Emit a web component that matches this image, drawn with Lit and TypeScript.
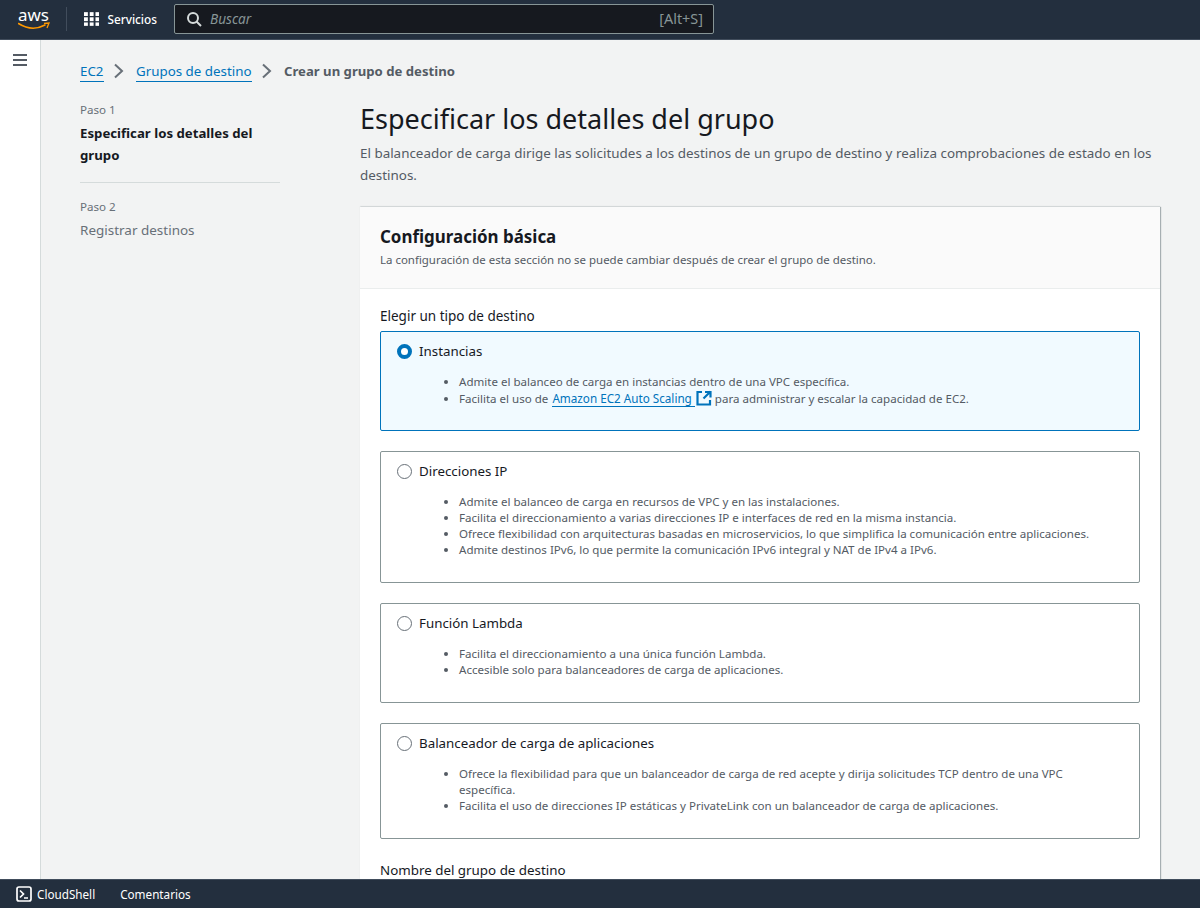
import { LitElement, html, css } from 'lit';
import { customElement } from 'lit/decorators.js';

const targets = [
  {
    name: 'Instancias',
    selected: true,
    height: 100,
    items: [
      html`Admite el balanceo de carga en instancias dentro de una VPC específica.`,
      html`Facilita el uso de <a class="scaling" href="#">Amazon EC2 Auto Scaling </a><svg class="ext" width="16" height="16" viewBox="0 0 16 16" fill="none" stroke="#0073bb" stroke-width="2.2"><path d="M9 2H14.5V7.5M14.5 1.5L7.5 8.5M6 2H1.5V14.5H14V10"/></svg> para administrar y escalar la capacidad de EC2.`,
    ],
  },
  {
    name: 'Direcciones IP',
    selected: false,
    height: 132,
    items: [
      html`Admite el balanceo de carga en recursos de VPC y en las instalaciones.`,
      html`Facilita el direccionamiento a varias direcciones IP e interfaces de red en la misma instancia.`,
      html`Ofrece flexibilidad con arquitecturas basadas en microservicios, lo que simplifica la comunicación entre aplicaciones.`,
      html`Admite destinos IPv6, lo que permite la comunicación IPv6 integral y NAT de IPv4 a IPv6.`,
    ],
  },
  {
    name: 'Función Lambda',
    selected: false,
    height: 100,
    items: [
      html`Facilita el direccionamiento a una única función Lambda.`,
      html`Accesible solo para balanceadores de carga de aplicaciones.`,
    ],
  },
  {
    name: 'Balanceador de carga de aplicaciones',
    selected: false,
    height: 116,
    items: [
      html`Ofrece la flexibilidad para que un balanceador de carga de red acepte y dirija solicitudes TCP dentro de una VPC específica.`,
      html`Facilita el uso de direcciones IP estáticas y PrivateLink con un balanceador de carga de aplicaciones.`,
    ],
  },
];

@customElement('app-root')
export class AppRoot extends LitElement {
  static styles = css`
    :host {
      display: flex;
      flex-direction: column;
      height: 908px;
      overflow: hidden;
      font-family: "Noto Sans", "Open Sans", sans-serif;
      font-size: 14px;
      line-height: 20px;
      color: #16191f;
      background: #f2f3f3;
    }
    a {
      color: #0073bb;
      text-decoration: none;
      border-bottom: 1px solid #0073bb;
    }

    .topnav {
      flex: none;
      height: 40px;
      box-sizing: border-box;
      background: #232f3e;
      border-bottom: 1px solid #414d5c;
      display: flex;
      align-items: center;
      padding: 0 0 1px 18px;
    }
    .logo {
      width: 34px;
      height: 32px;
      margin-right: 14px;
    }
    .logo text {
      font-family: "Noto Sans", sans-serif;
      font-size: 15.5px;
    }
    .sep {
      width: 1px;
      height: 24px;
      background: #414d5c;
      margin-right: 17px;
    }
    .services {
      display: flex;
      align-items: center;
      gap: 7px;
      color: #fff;
      font-size: 11.8px;
      font-weight: 500;
      margin-right: 17px;
      width: 73px;
    }
    .services span {
      margin-left: 1px;
    }
    .search {
      width: 540px;
      height: 30px;
      box-sizing: border-box;
      background: #16191f;
      border: 1px solid #879596;
      border-radius: 2px;
      display: flex;
      align-items: center;
      padding: 0 10px 0 11px;
      gap: 8px;
    }
    .search em {
      flex: 1;
      color: #879596;
      font-size: 13.6px;
    }
    .search span {
      color: #879596;
      font-size: 14.4px;
    }

    .body {
      flex: 1;
      min-height: 0;
      display: flex;
    }
    .rail {
      flex: none;
      width: 40px;
      background: #fff;
      border-right: 1px solid #d5dbdb;
      padding-top: 13px;
      display: flex;
      justify-content: center;
      align-items: flex-start;
    }
    .content {
      flex: 1;
      min-width: 0;
      padding: 20px 40px 0 39px;
      overflow: hidden;
    }

    .crumbs {
      display: flex;
      align-items: center;
      height: 22px;
      font-size: 13.35px;
      margin-bottom: 18px;
    }
    .crumbs a {
      line-height: 20px;
    }
    .crumbs svg {
      margin: 0 10.5px 0 6px;
    }
    .crumbs b {
      color: #545b64;
      font-weight: 700;
      font-size: 13.15px;
    }

    .wizard {
      display: flex;
    }
    .steps {
      flex: none;
      width: 200px;
      margin-right: 80px;
    }
    .step-label {
      font-size: 11.6px;
      line-height: 20px;
      color: #687078;
    }
    .step-current {
      font-size: 13.23px;
      font-weight: 700;
      line-height: 22px;
      margin-top: 2px;
    }
    .steps hr {
      border: 0;
      border-top: 1px solid #d5dbdb;
      margin: 16px 0 14px;
    }
    .step-next {
      font-size: 13.47px;
      color: #687078;
      line-height: 20px;
      margin-top: 3px;
    }

    .main {
      flex: 1;
      min-width: 0;
    }
    h1 {
      margin: 0;
      font-size: 27px;
      font-weight: 400;
      line-height: 38px;
    }
    .lead {
      margin: 4px 0 21px;
      font-size: 13.42px;
      line-height: 22px;
      color: #545b64;
    }

    .card {
      background: #fff;
      box-shadow: 1px 0 1px 0 rgba(0, 28, 36, 0.3), 0 -1px 1px 0 rgba(0, 28, 36, 0.08);
    }
    .card-head {
      background: #fafafa;
      border-bottom: 1px solid #eaeded;
      height: 82px;
      box-sizing: border-box;
      padding: 18px 20px 0;
    }
    h2 {
      margin: 0;
      font-size: 16.96px;
      font-weight: 700;
      line-height: 24px;
    }
    .card-head p {
      margin: 2px 0 0;
      font-size: 11.46px;
      line-height: 18px;
      color: #545b64;
    }
    .card-body {
      padding: 17px 20px 0;
    }
    .field-label {
      font-size: 13.5px;
      line-height: 20px;
      margin-bottom: 5px;
    }
    .options {
      display: flex;
      flex-direction: column;
      gap: 20px;
    }
    .option {
      box-sizing: border-box;
      border: 1px solid #879596;
      border-radius: 2px;
      padding: 9px 16px;
    }
    .option.selected {
      border-color: #0073bb;
      background: #f1faff;
    }
    .option-title {
      display: flex;
      align-items: center;
      gap: 7px;
      font-size: 13.34px;
      line-height: 20px;
    }
    .radio {
      width: 15px;
      height: 15px;
      box-sizing: border-box;
      border: 1px solid #687078;
      border-radius: 50%;
      background: #fff;
    }
    .selected .radio {
      border: 4px solid #0073bb;
    }
    .option ul {
      margin: 13px 0 0;
      padding: 0 20px 0 62px;
      font-size: 11.55px;
      line-height: 16px;
      color: #545b64;
    }
    .scaling {
      font-size: 11.7px;
      margin-left: 1px;
    }
    .ext {
      vertical-align: -3px;
      margin-left: 1px;
    }
    .name-label {
      font-size: 13.36px;
      line-height: 20px;
      margin-top: 21px;
    }

    .footer {
      flex: none;
      height: 29px;
      box-sizing: border-box;
      background: #232f3e;
      border-top: 1px solid #414d5c;
      color: #fff;
      font-size: 11.7px;
      display: flex;
      align-items: center;
      padding-left: 16px;
    }
    .shell {
      display: flex;
      align-items: center;
      gap: 5px;
      margin-right: 25px;
    }
  `;

  render() {
    return html`
      <header class="topnav">
        <svg class="logo" viewBox="0 -5 34 32">
          <text x="0" y="13" fill="#fff" textLength="31" lengthAdjust="spacingAndGlyphs">aws</text>
          <path d="M0.5 15.5Q14 24 27 17" fill="none" stroke="#f90" stroke-width="1.5" stroke-linecap="round"/>
          <path d="M26 15.5L31 15L29 20" fill="none" stroke="#f90" stroke-width="1.3"/>
        </svg>
        <div class="sep"></div>
        <div class="services">
          <svg width="18" height="16" viewBox="0 0 18 16" fill="#fff">
            <rect x="0" y="0" width="4.5" height="4.5"/><rect x="6.7" y="0" width="4.5" height="4.5"/><rect x="13.4" y="0" width="4.5" height="4.5"/>
            <rect x="0" y="6" width="4.5" height="4.5"/><rect x="6.7" y="6" width="4.5" height="4.5"/><rect x="13.4" y="6" width="4.5" height="4.5"/>
            <rect x="0" y="12" width="4.5" height="4"/><rect x="6.7" y="12" width="4.5" height="4"/><rect x="13.4" y="12" width="4.5" height="4"/>
          </svg>
          <span>Servicios</span>
        </div>
        <div class="search">
          <svg width="16" height="16" viewBox="0 0 16 16" fill="none" stroke="#d5dbdb" stroke-width="2"><circle cx="7" cy="7" r="5"/><path d="M10.5 10.5L15 15"/></svg>
          <em>Buscar</em>
          <span>[Alt+S]</span>
        </div>
      </header>

      <div class="body">
        <nav class="rail">
          <svg width="16" height="14" viewBox="0 0 16 14" stroke="#545b64" stroke-width="2"><path d="M1 2H15M1 7H15M1 12H15"/></svg>
        </nav>
        <div class="content">
          <div class="crumbs">
            <a href="#">EC2</a>
            <svg width="16" height="16" viewBox="0 0 16 16" fill="none" stroke="#687078" stroke-width="2"><path d="M5 1.5L12 8L5 14.5"/></svg>
            <a href="#">Grupos de destino</a>
            <svg width="16" height="16" viewBox="0 0 16 16" fill="none" stroke="#687078" stroke-width="2"><path d="M5 1.5L12 8L5 14.5"/></svg>
            <b>Crear un grupo de destino</b>
          </div>

          <div class="wizard">
            <aside class="steps">
              <div class="step-label">Paso 1</div>
              <div class="step-current">Especificar los detalles del grupo</div>
              <hr />
              <div class="step-label">Paso 2</div>
              <div class="step-next">Registrar destinos</div>
            </aside>

            <div class="main">
              <h1>Especificar los detalles del grupo</h1>
              <p class="lead">El balanceador de carga dirige las solicitudes a los destinos de un grupo de destino y realiza comprobaciones de estado en los destinos.</p>

              <section class="card">
                <div class="card-head">
                  <h2>Configuración básica</h2>
                  <p>La configuración de esta sección no se puede cambiar después de crear el grupo de destino.</p>
                </div>
                <div class="card-body">
                  <div class="field-label">Elegir un tipo de destino</div>
                  <div class="options">
                    ${targets.map(t => html`
                      <div class="option ${t.selected ? 'selected' : ''}" style="height:${t.height}px">
                        <div class="option-title"><span class="radio"></span>${t.name}</div>
                        <ul>${t.items.map(i => html`<li>${i}</li>`)}</ul>
                      </div>
                    `)}
                  </div>
                  <div class="name-label">Nombre del grupo de destino</div>
                </div>
              </section>
            </div>
          </div>
        </div>
      </div>

      <footer class="footer">
        <div class="shell">
          <svg width="16" height="16" viewBox="0 0 16 16" fill="none" stroke="#fff" stroke-width="1.7"><rect x="1" y="1" width="14" height="14" rx="2"/><path d="M4 4.5L7.5 8L4 11.5M8 12H12"/></svg>
          <span>CloudShell</span>
        </div>
        <span>Comentarios</span>
      </footer>
    `;
  }
}
